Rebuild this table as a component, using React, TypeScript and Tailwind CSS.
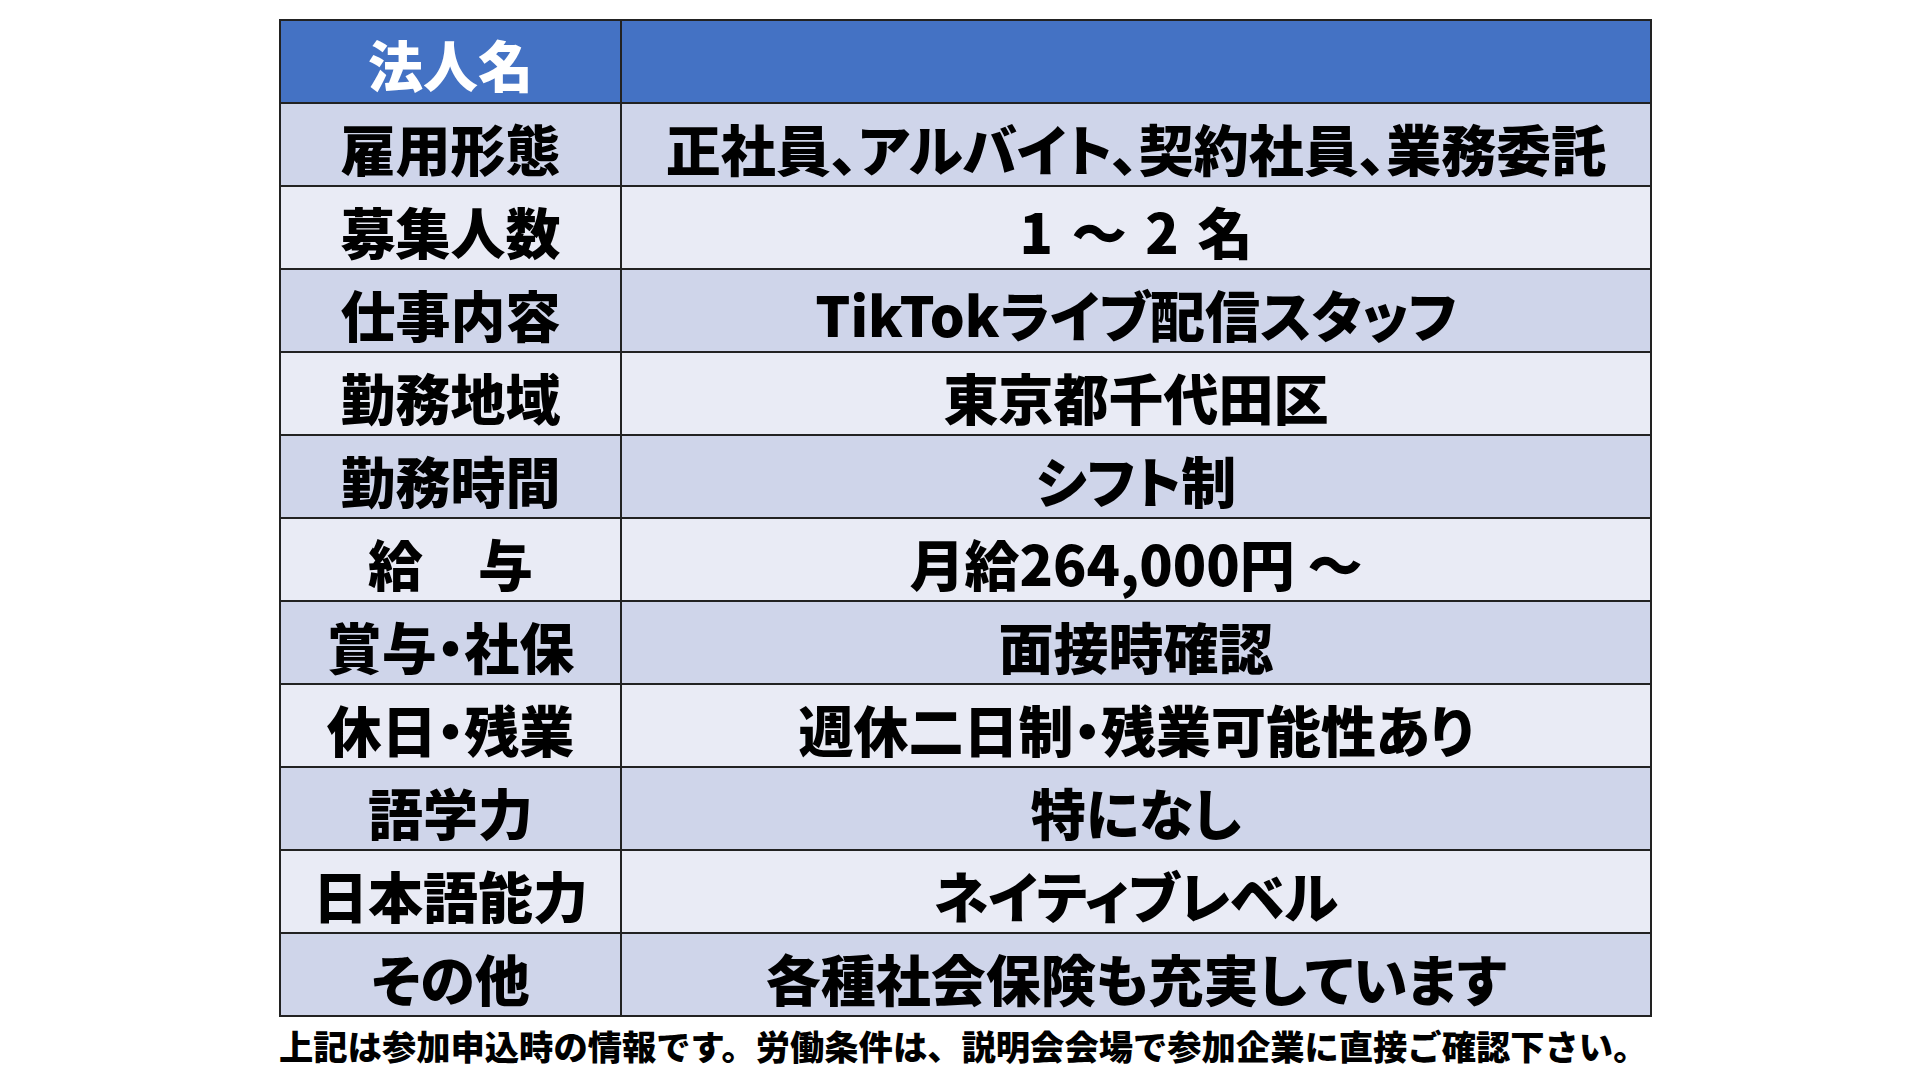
type Row = {
  label: string;
  value: string;
  wide?: boolean;
};

const rows: Row[] = [
  { label: '雇用形態', value: '正社員、アルバイト、契約社員、業務委託' },
  { label: '募集人数', value: '1 ～ 2 名', wide: true },
  { label: '仕事内容', value: 'TikTokライブ配信スタッフ' },
  { label: '勤務地域', value: '東京都千代田区' },
  { label: '勤務時間', value: 'シフト制' },
  { label: '給　与', value: '月給264,000円 ～' },
  { label: '賞与・社保', value: '面接時確認' },
  { label: '休日・残業', value: '週休二日制・残業可能性あり' },
  { label: '語学力', value: '特になし' },
  { label: '日本語能力', value: 'ネイティブレベル' },
  { label: 'その他', value: '各種社会保険も充実しています' },
];

export default function App() {
  return (
    <div className="w-[1920px] h-[1080px] bg-white pl-[279px] pt-[19px] font-['Noto_Sans_CJK_JP',sans-serif] text-black">
      {/* Job table */}
      <div className="w-[1373px] border-2 border-[#222] [font-feature-settings:'palt']">
        <div className="grid grid-cols-[341px_1fr] h-[83px] border-b-2 border-[#222] bg-[#4472c4]">
          <div className="flex items-center justify-center border-r-2 border-[#222] pt-1 text-[55px] leading-none font-black text-white">
            法人名
          </div>
          <div />
        </div>
        {rows.map((row, i) => {
          const last = i === rows.length - 1;
          return (
            <div
              key={row.label}
              className={`grid grid-cols-[341px_1fr] ${
                last ? 'h-[81px]' : 'h-[83px] border-b-2 border-[#222]'
              } ${i % 2 === 0 ? 'bg-[#cfd5ea]' : 'bg-[#e9ebf5]'}`}
            >
              <div className="flex items-center justify-center border-r-2 border-[#222] pt-1.5 text-[55px] leading-none font-black whitespace-nowrap">
                {row.label}
              </div>
              <div
                className={`flex items-center justify-center pt-1.5 text-[55px] leading-none font-black whitespace-pre ${
                  row.wide ? '[word-spacing:6px]' : ''
                }`}
              >
                {row.value}
              </div>
            </div>
          );
        })}
      </div>

      {/* Note */}
      <p className="mt-[11px] text-[34.3px] leading-none font-black whitespace-nowrap">
        上記は参加申込時の情報です。労働条件は、説明会会場で参加企業に直接ご確認下さい。
      </p>
    </div>
  );
}
